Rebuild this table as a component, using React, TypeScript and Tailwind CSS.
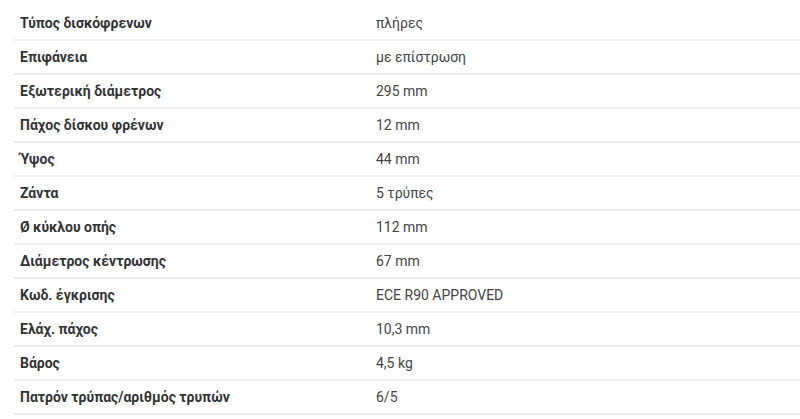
const rows: [string, string][] = [
  ["Τύπος δισκόφρενων", "πλήρες"],
  ["Επιφάνεια", "με επίστρωση"],
  ["Εξωτερική διάμετρος", "295 mm"],
  ["Πάχος δίσκου φρένων", "12 mm"],
  ["Ύψος", "44 mm"],
  ["Ζάντα", "5 τρύπες"],
  ["Ø κύκλου οπής", "112 mm"],
  ["Διάμετρος κέντρωσης", "67 mm"],
  ["Κωδ. έγκρισης", "ECE R90 APPROVED"],
  ["Ελάχ. πάχος", "10,3 mm"],
  ["Βάρος", "4,5 kg"],
  ["Πατρόν τρύπας/αριθμός τρυπών", "6/5"],
];

export default function App() {
  return (
    <div className="w-[800px] h-[419px] bg-white overflow-hidden pt-[7px] pl-[14px] font-['Roboto',sans-serif] text-[14px]">
      {rows.map(([label, value]) => (
        <div key={label} className="flex items-center h-[34px] border-b-2 border-[#eeeeee]">
          <div className="w-[362px] shrink-0 pl-[6px] font-bold text-[#333333]">{label}</div>
          <div className="text-[#444444]">{value}</div>
        </div>
      ))}
    </div>
  );
}
